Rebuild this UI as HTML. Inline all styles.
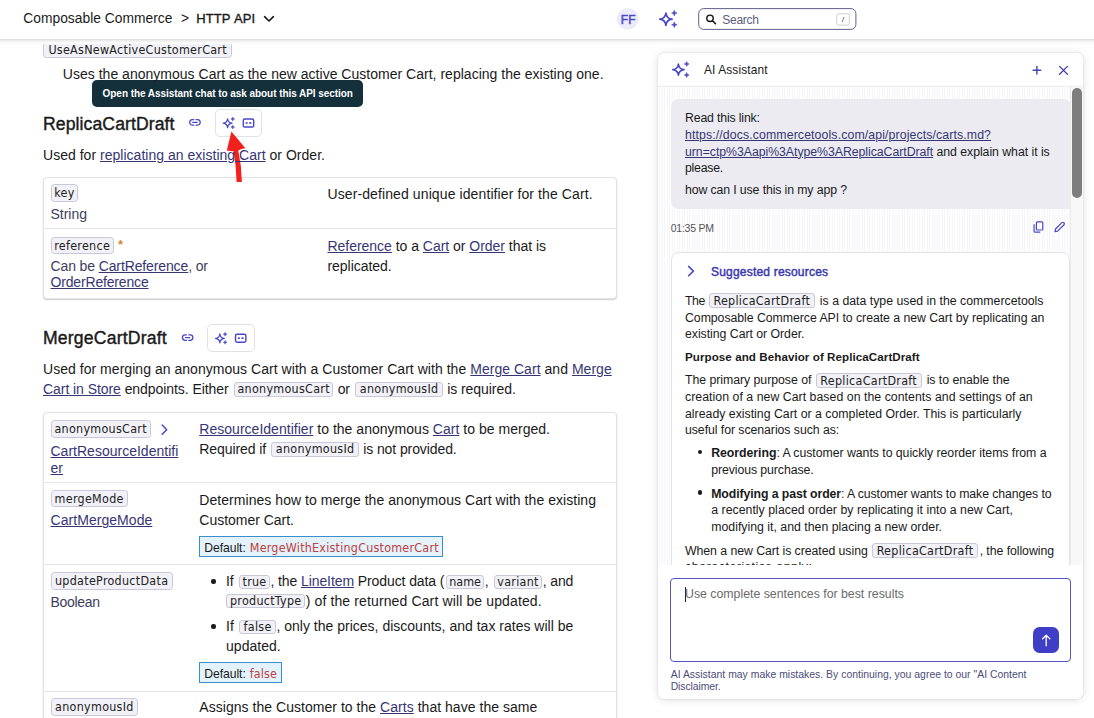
<!DOCTYPE html>
<html lang="en"><head><meta charset="utf-8"><title>Composable Commerce HTTP API</title>
<style>

html,body{margin:0;padding:0;background:#fff;}
body{width:1094px;height:718px;overflow:hidden;font-family:"Liberation Sans",sans-serif;color:#1a1a1a;}
#page{position:relative;width:1094px;height:718px;overflow:hidden;background:#fff;}
.t{position:absolute;white-space:nowrap;line-height:20px;color:#1a1a1a;}
.bm{display:inline-block;width:0;height:0;vertical-align:baseline;}
.abs{position:absolute;}
a,.lk{color:#363674;text-decoration:underline;text-decoration-thickness:1px;text-underline-offset:0.9px;}
code{display:inline-block;font-family:"DejaVu Sans Condensed","DejaVu Sans","Liberation Sans",sans-serif;font-size:12.4px;letter-spacing:0.3px;line-height:12px;height:11.4px;padding:0 0 1px 0;text-align:center;margin:0 0.5px 0 1.5px;border:1px solid #c8c8d8;border-radius:3px;background:#f1f1f7;color:#222;position:relative;top:-0.5px;}
.rp code{font-size:12.4px;height:13px;line-height:13.5px;top:0.3px;padding:0;margin:0 1.5px 0 0.8px;}
.chip{position:absolute;box-sizing:border-box;font-family:"DejaVu Sans Condensed","DejaVu Sans","Liberation Sans",sans-serif;font-size:12.4px;letter-spacing:0.3px;text-indent:0.3px;border:1px solid #c8c8d8;border-radius:3.5px;background:#f1f1f7;color:#222;white-space:nowrap;text-align:center;}
.hd{color:#1a1a1a;}
.med{-webkit-text-stroke:0.35px #1a1a1a;}
.ff{color:#4848c4;-webkit-text-stroke:0.45px #4848c4;}
.srch{color:#5c5c80;}
.tip{color:#fff;font-weight:bold;}
.h2{-webkit-text-stroke:0.4px #1a1a1a;}
.ty,.ty code{color:#3d3d5c;}
.df{color:#1a1a1a;}
.dv{font-family:"DejaVu Sans Condensed","DejaVu Sans","Liberation Sans",sans-serif;color:#bf4040;}
.rp{color:#1a1a1a;}
.b,b{font-weight:bold;}
.ts{color:#555;}
.sug{color:#3a3aae;-webkit-text-stroke:0.45px #3a3aae;}
.ph{color:#6b6b6b;}
.dis{color:#4c4c78;}
#hdr{left:0;top:0;width:1094px;height:38.6px;background:#fff;}
#hdrsh{left:0;top:38.6px;width:1094px;height:5px;background:linear-gradient(#dcdcdc,#ececec 30%,#f8f8f8 65%,#fff);}
.tbl{box-sizing:border-box;border:1px solid #e2e2e2;border-radius:4px;background:#fff;box-shadow:0 1px 1.5px rgba(0,0,0,.2);}
.sep{height:1px;background:#e4e4e4;}
.btnbox{box-sizing:border-box;border:1px solid #e2e2e6;border-radius:5px;background:#fff;}
.dbox{box-sizing:border-box;border:1px solid #3a8fc9;background:#e4f2fb;}
.dot{width:4.4px;height:4.4px;border-radius:50%;background:#1a1a1a;}
#panel{left:657.5px;top:52.5px;width:425.3px;height:646px;box-sizing:border-box;border-radius:6px;background:#fff;box-shadow:0 1px 9px rgba(0,0,0,.13),0 0 2px rgba(0,0,0,.14);}
#msgs{left:658px;top:86.5px;width:424.5px;height:478.5px;overflow:hidden;background:repeating-linear-gradient(90deg,#fefefe 0,#fefefe 1.3px,#f7f7fb 1.3px,#f7f7fb 2.5px);}
#msgs .in{position:absolute;left:-658px;top:-86.5px;width:1094px;height:718px;}

</style></head><body>
<div id="page">

<div class="abs chip" style="left:43px;top:42.2px;width:189px;height:15.6px;line-height:14.4px;">UseAsNewActiveCustomerCart</div>
<div class="abs tbl" style="left:43px;top:176.5px;width:573.5px;height:122px;"></div>
<div class="abs sep" style="left:44px;top:228px;width:571.5px;"></div>
<div class="abs chip" style="left:50.5px;top:184.4px;width:27.5px;height:17.5px;line-height:16px;">key</div>
<div class="abs chip" style="left:50.5px;top:236.6px;width:63px;height:17.5px;line-height:16px;">reference</div>
<div class="abs" style="left:118.3px;top:238.6px;font-size:12px;line-height:12px;color:#d9822b;font-weight:bold;">*</div>
<div class="abs tbl" style="left:43px;top:412px;width:573.5px;height:330px;"></div>
<div class="abs sep" style="left:44px;top:482px;width:571.5px;"></div>
<div class="abs sep" style="left:44px;top:563.7px;width:571.5px;"></div>
<div class="abs sep" style="left:44px;top:690.5px;width:571.5px;"></div>
<div class="abs chip" style="left:50.5px;top:420.4px;width:100px;height:17.5px;line-height:16px;">anonymousCart</div>
<div class="abs chip" style="left:50.5px;top:489.9px;width:77px;height:17.5px;line-height:16px;">mergeMode</div>
<div class="abs chip" style="left:50.5px;top:572.2px;width:122px;height:17.5px;line-height:16px;">updateProductData</div>
<div class="abs chip" style="left:50.5px;top:698.1px;width:87.5px;height:17.5px;line-height:16px;">anonymousId</div>
<div class="abs dbox" style="left:199px;top:535.7px;width:243.5px;height:21.8px;"></div>
<div class="abs dbox" style="left:199px;top:661.7px;width:83px;height:21.6px;"></div>
<div class="abs dot" style="left:211.3px;top:579.3px;"></div>
<div class="abs dot" style="left:211.3px;top:624.3px;"></div>
<div class="abs btnbox" style="left:214.7px;top:109px;width:47.3px;height:27.5px;"></div>
<div class="abs btnbox" style="left:207.3px;top:324.3px;width:47.8px;height:27.5px;"></div>
<div class="abs" style="left:92.3px;top:80px;width:271.2px;height:26.7px;border-radius:5px;background:#13303b;"></div>
<svg class="abs" style="left:0;top:0;" width="660" height="718" viewBox="0 0 660 718">
  <!-- link icons -->
  <g fill="none" stroke="#4848c4" stroke-width="1.3" stroke-linecap="round">
    <path d="M193.8 119.6h-1.3a2.8 2.8 0 0 0 0 5.6h1.3M196.1 119.6h1.3a2.8 2.8 0 0 1 0 5.6h-1.3M192.8 122.4h4.3"/>
    <path d="M186.5 334.8h-1.3a2.8 2.8 0 0 0 0 5.6h1.3M188.8 334.8h1.3a2.8 2.8 0 0 1 0 5.6h-1.3M185.5 337.6h4.3"/>
  </g>
  <!-- sparkle + card icons (section 1) -->
  <path d="M227.60 118.80Q228.03 122.77 232.00 123.20Q228.03 123.63 227.60 127.60Q227.17 123.63 223.20 123.20Q227.17 122.77 227.60 118.80Z" fill="none" stroke="#4848c4" stroke-width="1.3" stroke-linejoin="round"/><path d="M232.80 117.10Q232.99 118.81 234.70 119.00Q232.99 119.19 232.80 120.90Q232.61 119.19 230.90 119.00Q232.61 118.81 232.80 117.10ZM232.80 125.20Q232.99 126.91 234.70 127.10Q232.99 127.29 232.80 129.00Q232.61 127.29 230.90 127.10Q232.61 126.91 232.80 125.20Z" fill="#4848c4" stroke="#4848c4" stroke-width="0.5" stroke-linejoin="round"/>
  <rect x="243.3" y="119" width="10.4" height="8" rx="1.6" fill="none" stroke="#4848c4" stroke-width="1.4"/>
  <rect x="245.6" y="122.2" width="2" height="1.6" fill="#4848c4"/><rect x="249.2" y="122.2" width="2.2" height="1.6" fill="#4848c4"/>
  <!-- section 2 -->
  <path d="M219.90 334.00Q220.33 337.97 224.30 338.40Q220.33 338.83 219.90 342.80Q219.47 338.83 215.50 338.40Q219.47 337.97 219.90 334.00Z" fill="none" stroke="#4848c4" stroke-width="1.3" stroke-linejoin="round"/><path d="M225.10 332.30Q225.29 334.01 227.00 334.20Q225.29 334.39 225.10 336.10Q224.91 334.39 223.20 334.20Q224.91 334.01 225.10 332.30ZM225.10 340.40Q225.29 342.11 227.00 342.30Q225.29 342.49 225.10 344.20Q224.91 342.49 223.20 342.30Q224.91 342.11 225.10 340.40Z" fill="#4848c4" stroke="#4848c4" stroke-width="0.5" stroke-linejoin="round"/>
  <rect x="235.5" y="334.2" width="10.4" height="8" rx="1.6" fill="none" stroke="#4848c4" stroke-width="1.4"/>
  <rect x="237.8" y="337.4" width="2" height="1.6" fill="#4848c4"/><rect x="241.4" y="337.4" width="2.2" height="1.6" fill="#4848c4"/>
  <!-- chevron right -->
  <path d="M162.2 425.1l4.5 4.6-4.5 4.6" fill="none" stroke="#4848c4" stroke-width="1.5" stroke-linecap="round" stroke-linejoin="round"/>
  <!-- red arrow -->
  <path d="M231.4 131.5L245.4 148.2Q241 148.6 238.3 150.4Q241.6 166 241.9 182L236.6 182Q236.2 166 233.6 151.3Q230.5 151.3 226.8 150.6Z" fill="#f3201d"/>
</svg>
<div class="abs" id="hdr"></div><div class="abs" id="hdrsh"></div>
<svg class="abs" style="left:0;top:0;" width="1094" height="40" viewBox="0 0 1094 40">
  <path d="M264.6 16.6l4.4 4.4 4.4-4.4" fill="none" stroke="#1a1a1a" stroke-width="1.6" stroke-linecap="round" stroke-linejoin="round"/>
  <circle cx="627.8" cy="18.8" r="10.8" fill="#ebebfa"/>
  <path d="M665.90 13.00Q666.51 18.59 672.10 19.20Q666.51 19.81 665.90 25.40Q665.29 19.81 659.70 19.20Q665.29 18.59 665.90 13.00Z" fill="none" stroke="#4848c4" stroke-width="1.7" stroke-linejoin="round"/><path d="M674.30 10.30Q674.57 12.83 677.10 13.10Q674.57 13.37 674.30 15.90Q674.03 13.37 671.50 13.10Q674.03 12.83 674.30 10.30ZM674.30 22.00Q674.57 24.53 677.10 24.80Q674.57 25.07 674.30 27.60Q674.03 25.07 671.50 24.80Q674.03 24.53 674.30 22.00Z" fill="#4848c4" stroke="#4848c4" stroke-width="0.5" stroke-linejoin="round"/>
  <rect x="698.7" y="8.6" width="157.2" height="20.8" rx="5" fill="#fff" stroke="#5f5f8c" stroke-width="1"/>
  <circle cx="710" cy="18.3" r="3.2" fill="none" stroke="#111" stroke-width="1.4"/>
  <path d="M712.5 20.8l3 3" stroke="#111" stroke-width="1.5" stroke-linecap="round"/>
  <rect x="836.7" y="13.8" width="12.6" height="11.4" rx="2" fill="#fff" stroke="#cfcfcf" stroke-width="1"/>
  <path d="M842.2 22l1.8-5" stroke="#777" stroke-width="0.9"/>
</svg>


<div class="abs" id="panel"></div>
<svg class="abs" style="left:657px;top:52px;" width="430" height="36" viewBox="657 52 430 36">
  <path d="M678.40 64.00Q678.95 69.05 684.00 69.60Q678.95 70.15 678.40 75.20Q677.85 70.15 672.80 69.60Q677.85 69.05 678.40 64.00Z" fill="none" stroke="#4848c4" stroke-width="1.6" stroke-linejoin="round"/><path d="M686.70 61.50Q686.94 63.75 689.20 64.00Q686.94 64.24 686.70 66.50Q686.45 64.24 684.20 64.00Q686.45 63.75 686.70 61.50ZM686.70 72.50Q686.94 74.75 689.20 75.00Q686.94 75.25 686.70 77.50Q686.45 75.25 684.20 75.00Q686.45 74.75 686.70 72.50Z" fill="#4848c4" stroke="#4848c4" stroke-width="0.5" stroke-linejoin="round"/>
  <path d="M1033.1 70.2h7.6M1036.9 66.4v7.6" stroke="#4141b4" stroke-width="1.4" stroke-linecap="round"/>
  <path d="M1059.6 66.4l7.8 7.8M1067.4 66.4l-7.8 7.8" stroke="#4141b4" stroke-width="1.3" stroke-linecap="round"/>
  <path d="M658 86.3h424.5" stroke="#ececec" stroke-width="1"/>
</svg>
<div class="abs" id="msgs"><div class="in">
  <div class="abs" style="left:670.7px;top:99.2px;width:400px;height:110.3px;border-radius:8px 8px 0 8px;background:#ebebf1;"></div>
  <div class="abs" style="left:670.6px;top:251.9px;width:399px;height:340px;box-sizing:border-box;border:1px solid #e3e3e8;border-radius:8px;background:#fff;"></div>
  <div class="abs dot" style="left:697.9px;top:449.6px;width:4.2px;height:4.2px;"></div>
  <div class="abs dot" style="left:697.9px;top:490.4px;width:4.2px;height:4.2px;"></div>
  <svg class="abs" style="left:658px;top:86px;" width="425" height="480" viewBox="658 86 425 480">
    <path d="M688.6 266.4l4.8 4.7-4.8 4.7" fill="none" stroke="#4848c4" stroke-width="1.5" stroke-linecap="round" stroke-linejoin="round"/>
    <g fill="none" stroke="#4848c4" stroke-width="1.2" stroke-linejoin="round">
      <rect x="1036.4" y="221.8" width="6.4" height="8.2" rx="1"/>
      <path d="M1034.1 224.2v7a1 1 0 0 0 1 1h5.2"/>
      <path d="M1055 231.6l0.5-2.6 6.4-6.4a1.2 1.2 0 0 1 1.7 0l0.4 0.4a1.2 1.2 0 0 1 0 1.7l-6.4 6.4z"/>
    </g>
  </svg>
  <div class="t rp" style="left:685.00px;top:108.31px;font-size:12.3px;letter-spacing:-0.160px;">Read this link:</div>
<div class="t rp" style="left:685.00px;top:124.81px;font-size:12.3px;letter-spacing:0.114px;"><span class="lk">https://docs.commercetools.com/api/projects/carts.md?</span></div>
<div class="t rp" style="left:685.00px;top:141.60px;font-size:12.3px;letter-spacing:-0.044px;"><span class="lk">urn=ctp%3Aapi%3Atype%3AReplicaCartDraft</span> and explain what it is</div>
<div class="t rp" style="left:685.00px;top:157.81px;font-size:12.3px;letter-spacing:-0.244px;">please.</div>
<div class="t rp" style="left:685.00px;top:180.31px;font-size:12.3px;letter-spacing:-0.118px;">how can I use this in my app ?</div>
<div class="t ts" style="left:670.70px;top:217.81px;font-size:10.5px;letter-spacing:-0.236px;">01:35 PM</div>
<div class="t sug" style="left:711.00px;top:261.60px;font-size:12px;letter-spacing:0.200px;">Suggested resources</div>
<div class="t rp" style="left:685.00px;top:291.10px;font-size:12.3px;letter-spacing:0.004px;"><span style='letter-spacing:-0.45px'>The </span><code style="width:104.3px;">ReplicaCartDraft</code> is a data type used in the commercetools</div>
<div class="t rp" style="left:685.00px;top:307.81px;font-size:12.3px;letter-spacing:-0.046px;">Composable Commerce API to create a new Cart by replicating an</div>
<div class="t rp" style="left:685.00px;top:324.10px;font-size:12.3px;letter-spacing:-0.036px;">existing Cart or Order.</div>
<div class="t rp b" style="left:685.00px;top:347.10px;font-size:11.6px;letter-spacing:0.070px;">Purpose and Behavior of ReplicaCartDraft</div>
<div class="t rp" style="left:685.00px;top:370.31px;font-size:12.3px;letter-spacing:-0.037px;">The primary purpose of <code style="width:104.3px;">ReplicaCartDraft</code> is to enable the</div>
<div class="t rp" style="left:685.00px;top:387.10px;font-size:12.3px;letter-spacing:0.039px;">creation of a new Cart based on the contents and settings of an</div>
<div class="t rp" style="left:685.00px;top:403.60px;font-size:12.3px;letter-spacing:0.007px;">already existing Cart or a completed Order. This is particularly</div>
<div class="t rp" style="left:685.00px;top:419.81px;font-size:12.3px;letter-spacing:-0.059px;">useful for scenarios such as:</div>
<div class="t rp" style="left:711.20px;top:442.81px;font-size:12.3px;letter-spacing:-0.039px;"><b>Reordering</b>: A customer wants to quickly reorder items from a</div>
<div class="t rp" style="left:711.20px;top:459.60px;font-size:12.3px;letter-spacing:-0.083px;">previous purchase.</div>
<div class="t rp" style="left:711.20px;top:483.60px;font-size:12.3px;letter-spacing:-0.094px;"><b>Modifying a past order</b>: A customer wants to make changes to</div>
<div class="t rp" style="left:711.20px;top:500.31px;font-size:12.3px;letter-spacing:0.030px;">a recently placed order by replicating it into a new Cart,</div>
<div class="t rp" style="left:711.20px;top:517.10px;font-size:12.3px;letter-spacing:0.010px;">modifying it, and then placing a new order.</div>
<div class="t rp" style="left:685.00px;top:540.81px;font-size:12.3px;letter-spacing:-0.058px;">When a new Cart is created using <code style="width:104.3px;">ReplicaCartDraft</code>, the following</div>
<div class="t rp" style="left:685.00px;top:557.20px;font-size:12.3px;letter-spacing:0.580px;">characteristics apply:</div>
  <div class="abs" style="left:1070.3px;top:86px;width:12.6px;height:480px;background:#f8f8f8;border-left:1px solid #ebebeb;box-sizing:border-box;"></div>
  <div class="abs" style="left:1072.4px;top:87.6px;width:9.4px;height:110px;border-radius:5px;background:#7d7d7d;"></div>
</div></div>
<div class="abs" style="left:670px;top:577.7px;width:401px;height:84.2px;box-sizing:border-box;border:1.5px solid #5454c4;border-radius:4px;background:#fff;"></div>
<div class="abs" style="left:685px;top:586.5px;width:1px;height:15px;background:#222;"></div>
<div class="abs" style="left:1033.1px;top:627.1px;width:26px;height:26.2px;border-radius:6.5px;background:#3f3fc6;"></div>
<svg class="abs" style="left:1032px;top:626px;" width="28" height="28" viewBox="1032 626 28 28">
  <path d="M1046.2 645.8v-10M1042.6 638.8l3.6-3.6 3.6 3.6" fill="none" stroke="#fff" stroke-width="1.3" stroke-linecap="round" stroke-linejoin="round"/>
</svg>

<div class="t hd" style="left:23.30px;top:9.31px;font-size:13.8px;letter-spacing:0.019px;">Composable Commerce</div>
<div class="t hd" style="left:181.00px;top:9.31px;font-size:13.8px;letter-spacing:0.000px;">&gt;</div>
<div class="t hd med" style="left:196.20px;top:9.31px;font-size:13.0px;letter-spacing:0.062px;word-spacing:1px;">HTTP API</div>
<div class="t ff" style="left:620.70px;top:9.50px;font-size:12.0px;letter-spacing:0.131px;">FF</div>
<div class="t srch" style="left:722.30px;top:9.81px;font-size:12px;letter-spacing:-0.265px;">Search</div>
<div class="t " style="left:62.80px;top:63.50px;font-size:14.0px;letter-spacing:0.018px;">Uses the anonymous Cart as the new active Customer Cart, replacing the existing one.</div>
<div class="t tip" style="left:102.60px;top:84.00px;font-size:10px;letter-spacing:-0.054px;">Open the Assistant chat to ask about this API section</div>
<div class="t h2" style="left:43.00px;top:113.72px;font-size:17.6px;letter-spacing:0.097px;">ReplicaCartDraft</div>
<div class="t " style="left:43.00px;top:144.81px;font-size:14.0px;letter-spacing:0.023px;">Used for <a>replicating an existing Cart</a> or Order.</div>
<div class="t ty" style="left:50.50px;top:204.21px;font-size:14.0px;letter-spacing:-0.016px;">String</div>
<div class="t " style="left:327.50px;top:184.10px;font-size:14.0px;letter-spacing:0.102px;">User-defined unique identifier for the Cart.</div>
<div class="t ty" style="left:50.50px;top:255.50px;font-size:14.0px;letter-spacing:-0.122px;">Can be <a>CartReference</a>, or</div>
<div class="t ty" style="left:50.50px;top:272.21px;font-size:14.0px;letter-spacing:-0.168px;"><a>OrderReference</a></div>
<div class="t " style="left:327.50px;top:235.91px;font-size:14.0px;letter-spacing:-0.027px;"><a>Reference</a> to a <a>Cart</a> or <a>Order</a> that is</div>
<div class="t " style="left:327.50px;top:255.50px;font-size:14.0px;letter-spacing:-0.040px;">replicated.</div>
<div class="t h2" style="left:43.00px;top:328.01px;font-size:17.6px;letter-spacing:0.189px;">MergeCartDraft</div>
<div class="t " style="left:43.00px;top:358.81px;font-size:14.0px;letter-spacing:0.036px;">Used for merging an anonymous Cart with a Customer Cart with the <a>Merge Cart</a> and <a>Merge</a></div>
<div class="t " style="left:43.00px;top:378.81px;font-size:14.0px;letter-spacing:-0.061px;"><a>Cart in Store</a> endpoints. Either <code style="width:97.3px;">anonymousCart</code> or <code style="width:85.6px;">anonymousId</code> is required.</div>
<div class="t ty" style="left:50.50px;top:440.50px;font-size:14.0px;letter-spacing:0.009px;"><a>CartResourceIdentifi</a></div>
<div class="t ty" style="left:50.50px;top:457.81px;font-size:14.0px;letter-spacing:0.047px;"><a>er</a></div>
<div class="t " style="left:199.30px;top:418.81px;font-size:14.0px;letter-spacing:0.023px;"><a>ResourceIdentifier</a> to the anonymous <a>Cart</a> to be merged.</div>
<div class="t " style="left:199.30px;top:438.81px;font-size:14.0px;letter-spacing:-0.092px;">Required if <code style="width:85.6px;">anonymousId</code> is not provided.</div>
<div class="t ty" style="left:50.50px;top:509.50px;font-size:14.0px;letter-spacing:0.054px;"><a>CartMergeMode</a></div>
<div class="t " style="left:199.30px;top:489.50px;font-size:14.0px;letter-spacing:0.050px;">Determines how to merge the anonymous Cart with the existing</div>
<div class="t " style="left:199.30px;top:509.50px;font-size:14.0px;letter-spacing:-0.018px;">Customer Cart.</div>
<div class="t df" style="left:204.30px;top:537.50px;font-size:12.2px;letter-spacing:-0.072px;">Default:</div>
<div class="t dv" style="left:249.80px;top:537.51px;font-size:12.4px;letter-spacing:0.245px;">MergeWithExistingCustomerCart</div>
<div class="t ty" style="left:50.50px;top:592.21px;font-size:14.0px;letter-spacing:-0.313px;">Boolean</div>
<div class="t " style="left:226.00px;top:571.21px;font-size:14.0px;letter-spacing:-0.092px;">If <code style="width:29.0px;letter-spacing:0.2px;">true</code>, the <a>LineItem</a> Product data (<code style="width:36.3px;letter-spacing:0.0px;">name</code>, <code style="width:46.3px;">variant</code>, and</div>
<div class="t " style="left:224.70px;top:590.50px;font-size:14.0px;letter-spacing:0.126px;"><code style="width:77.0px;">productType</code>) of the returned Cart will be updated.</div>
<div class="t " style="left:226.00px;top:616.21px;font-size:14.0px;letter-spacing:0.009px;">If <code style="width:34.7px;">false</code>, only the prices, discounts, and tax rates will be</div>
<div class="t " style="left:226.00px;top:635.50px;font-size:14.0px;letter-spacing:0.027px;">updated.</div>
<div class="t df" style="left:204.30px;top:663.50px;font-size:12.2px;letter-spacing:-0.072px;">Default:</div>
<div class="t dv" style="left:249.80px;top:663.51px;font-size:12.4px;letter-spacing:0.118px;">false</div>
<div class="t " style="left:199.30px;top:697.21px;font-size:14.0px;letter-spacing:0.036px;">Assigns the Customer to the <a>Carts</a> that have the same</div>
<div class="t rp" style="left:703.90px;top:60.40px;font-size:11.9px;letter-spacing:0.134px;">AI Assistant</div>
<div class="t ph" style="left:685.00px;top:583.51px;font-size:12.3px;letter-spacing:0.007px;">Use complete sentences for best results</div>
<div class="t dis" style="left:670.70px;top:664.51px;font-size:10.4px;letter-spacing:0.021px;">AI Assistant may make mistakes. By continuing, you agree to our "AI Content</div>
<div class="t dis" style="left:670.70px;top:676.51px;font-size:10.4px;letter-spacing:-0.080px;">Disclaimer.</div>
</div>
</body></html>
